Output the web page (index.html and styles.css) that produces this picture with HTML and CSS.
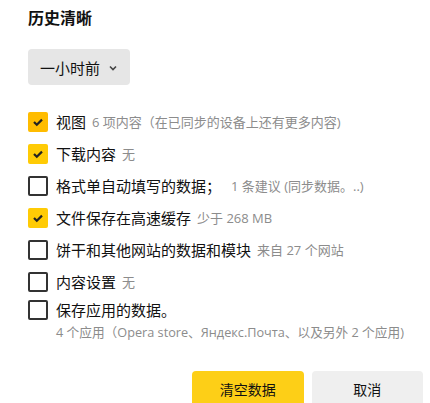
FILE: index.html
```html
<!DOCTYPE html>
<html lang="zh">
<head>
<meta charset="utf-8">
<link rel="stylesheet" href="styles.css">
</head>
<body>
<div class="dialog">
  <h1 class="title">历史清晰</h1>
  <div class="select">
    <span>一小时前</span>
    <svg class="chev" width="8" height="6" viewBox="0 0 8 6"><path d="M1 1.5 L4 4.5 L7 1.5" fill="none" stroke="#444" stroke-width="1.6"/></svg>
  </div>
  <ul class="options">
    <li class="opt">
      <span class="box checked hover"><svg width="12" height="10" viewBox="0 0 12 10"><path d="M2 5 L4.8 7.8 L10 2.6" fill="none" stroke="#222" stroke-width="2.2"/></svg></span>
      <span class="label">视图</span><span class="note">6 项内容（在已同步的设备上还有更多内容)</span>
    </li>
    <li class="opt">
      <span class="box checked"><svg width="12" height="10" viewBox="0 0 12 10"><path d="M2 5 L4.8 7.8 L10 2.6" fill="none" stroke="#222" stroke-width="2.2"/></svg></span>
      <span class="label">下载内容</span><span class="note">无</span>
    </li>
    <li class="opt">
      <span class="box"></span>
      <span class="label">格式单自动填写的数据；</span><span class="note wide">1 条建议 (同步数据。..)</span>
    </li>
    <li class="opt">
      <span class="box checked"><svg width="12" height="10" viewBox="0 0 12 10"><path d="M2 5 L4.8 7.8 L10 2.6" fill="none" stroke="#222" stroke-width="2.2"/></svg></span>
      <span class="label">文件保存在高速缓存</span><span class="note">少于 268 MB</span>
    </li>
    <li class="opt">
      <span class="box"></span>
      <span class="label">饼干和其他网站的数据和模块</span><span class="note">来自 27 个网站</span>
    </li>
    <li class="opt">
      <span class="box"></span>
      <span class="label">内容设置</span><span class="note">无</span>
    </li>
    <li class="opt last">
      <span class="box"></span>
      <div class="stack">
        <span class="label">保存应用的数据。</span>
        <span class="sub">4 个应用（Opera store、Яндекс.Почта、以及另外 2 个应用)</span>
      </div>
    </li>
  </ul>
  <div class="actions">
    <button class="btn primary">清空数据</button>
    <button class="btn">取消</button>
  </div>
</div>
</body>
</html>
```

FILE: styles.css
```css
* { box-sizing: border-box; }
html, body { margin: 0; padding: 0; background: #fff; }
body {
  font-family: "Open Sans", "Noto Sans CJK SC", sans-serif;
  color: #111;
}
.dialog {
  padding: 6px 7px 0 28px;
}
.title {
  margin: 0;
  font-size: 16px;
  font-weight: 700;
  line-height: 24px;
  color: #111;
}
.select {
  margin-top: 19px;
  width: 102px;
  height: 36px;
  background: #e6e6e6;
  border-radius: 4px;
  display: flex;
  align-items: center;
  padding-left: 12px;
  gap: 9px;
  font-size: 15px;
}
.chev { margin-top: 1px; }
.options {
  list-style: none;
  margin: 27px 0 0 0;
  padding: 0;
  display: flex;
  flex-direction: column;
  gap: 12px;
}
.opt {
  display: flex;
  align-items: center;
  height: 20px;
}
.opt.last {
  margin-top: -4px;
  align-items: flex-start;
  height: auto;
}
.box {
  width: 20px;
  height: 20px;
  border: 2px solid #333;
  border-radius: 2px;
  flex: none;
  display: flex;
  align-items: center;
  justify-content: center;
  margin-right: 8px;
}
.box.checked { background: #ffcb05; border-color: #ffcb05; }
.box.checked.hover { background: #ffbc00; border-color: #ffbc00; }
.label {
  font-size: 15px;
  line-height: 20px;
  color: #111;
}
.note {
  font-size: 13px;
  color: #8c8c8c;
  margin-left: 6px;
  line-height: 20px;
}
.note.wide { margin-left: 10px; }
.stack { display: flex; flex-direction: column; }
.sub {
  font-size: 12.7px;
  color: #8c8c8c;
  line-height: 16px;
  margin-top: 4px;
}
.actions {
  margin-top: 31px;
  display: flex;
  gap: 8px;
  padding-left: 164px;
}
.btn {
  width: 112px;
  height: 36px;
  border: none;
  border-radius: 4px;
  background: #efefef;
  font-family: "Open Sans", "Noto Sans CJK SC", sans-serif;
  font-size: 14px;
  color: #111;
  padding: 0;
}
.btn.primary { background: #fdcf17; }
```
